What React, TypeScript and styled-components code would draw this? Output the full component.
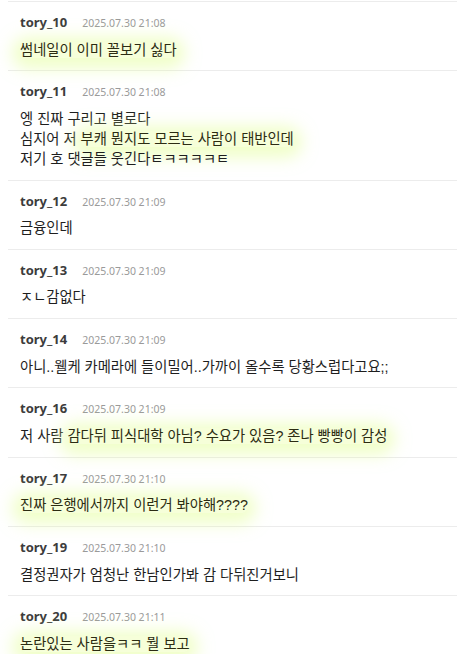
import React from "react";
import styled, { createGlobalStyle } from "styled-components";

const GlobalStyle = createGlobalStyle`
  body {
    margin: 0;
    background: #ffffff;
    font-family: "Noto Sans", "Noto Sans CJK KR", sans-serif;
  }
`;

type Part = string | { hl: string };

type Comment = {
  name: string;
  date: string;
  lines: Part[][];
};

const comments: Comment[] = [
  { name: "tory_10", date: "2025.07.30 21:08", lines: [[{ hl: "썸네일이 이미 꼴보기 싫다" }]] },
  {
    name: "tory_11",
    date: "2025.07.30 21:08",
    lines: [
      ["엥 진짜 구리고 별로다"],
      ["심지어 저 ", { hl: "부캐 뭔지도 모르는 사람이 태반인데" }],
      ["저기 호 댓글들 웃긴다ㅌㅋㅋㅋㅋㅌ"],
    ],
  },
  { name: "tory_12", date: "2025.07.30 21:09", lines: [["금융인데"]] },
  { name: "tory_13", date: "2025.07.30 21:09", lines: [["ㅈㄴ감없다"]] },
  {
    name: "tory_14",
    date: "2025.07.30 21:09",
    lines: [["아니..웰케 카메라에 들이밀어..가까이 올수록 당황스럽다고요;;"]],
  },
  {
    name: "tory_16",
    date: "2025.07.30 21:09",
    lines: [["저 사람 ", { hl: "감다뒤 피식대학 아님? 수요가 있음? 존나 빵빵이 감성" }]],
  },
  { name: "tory_17", date: "2025.07.30 21:10", lines: [[{ hl: "진짜 은행에서까지 이런거 봐야해????" }]] },
  {
    name: "tory_19",
    date: "2025.07.30 21:10",
    lines: [["결정권자가 엄청난 한남인가봐 감 다뒤진거보니"]],
  },
  { name: "tory_20", date: "2025.07.30 21:11", lines: [[{ hl: "논란있는 사람을ㅋㅋ 뭘 보고" }]] },
];

const List = styled.ul`
  list-style: none;
  margin: 1px 0 0 8px;
  padding: 0;
  border-top: 1px solid #ececec;
`;

const Item = styled.li`
  padding: 11px 12px 10.8px;
  border-bottom: 1px solid #ececec;
`;

const Meta = styled.div`
  display: flex;
  align-items: baseline;
  gap: 15px;
  line-height: 19.5px;
  margin-bottom: 6px;
`;

const Name = styled.span`
  font-family: "Noto Sans", sans-serif;
  font-weight: 700;
  font-size: 13px;
  color: #3c3c3c;
`;

const Date = styled.span`
  font-family: "Noto Sans", sans-serif;
  font-size: 10.5px;
  color: #9a9a9a;
`;

const Body = styled.div`
  font-family: "Liberation Sans", "Noto Sans CJK KR", sans-serif;
  font-size: 14.3px;
  line-height: 20px;
  color: #1e1e1e;
`;

const Mark = styled.span`
  background: rgba(232, 255, 160, 0.4);
  box-shadow: 0 3px 16px 8px rgba(228, 255, 150, 0.5);
  border-radius: 16px;
  color: #2c2c12;
`;

export default function App() {
  return (
    <>
      <GlobalStyle />
      <List>
        {comments.map((c) => (
          <Item key={c.name}>
            <Meta>
              <Name>{c.name}</Name>
              <Date>{c.date}</Date>
            </Meta>
            <Body>
              {c.lines.map((line, i) => (
                <div key={i}>
                  {line.map((p, j) =>
                    typeof p === "string" ? p : <Mark key={j}>{p.hl}</Mark>
                  )}
                </div>
              ))}
            </Body>
          </Item>
        ))}
      </List>
    </>
  );
}
